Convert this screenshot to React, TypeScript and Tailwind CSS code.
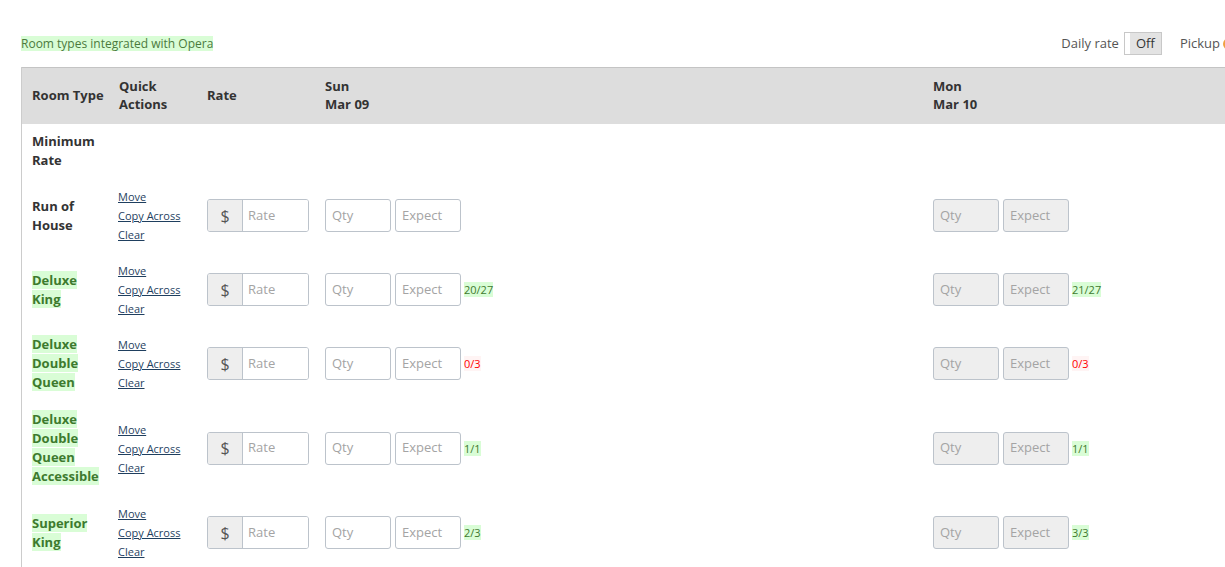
import React from "react";

const font = { fontFamily: '"Open Sans", "Noto Sans", sans-serif' };

type Badge = { text: string; kind: "ok" | "bad" };

type Row = {
  name: string[];
  opera: boolean;
  tall?: boolean;
  sun?: Badge;
  mon?: Badge;
};

const rows: Row[] = [
  { name: ["Run of", "House"], opera: false },
  { name: ["Deluxe", "King"], opera: true, sun: { text: "20/27", kind: "ok" }, mon: { text: "21/27", kind: "ok" } },
  { name: ["Deluxe", "Double", "Queen"], opera: true, sun: { text: "0/3", kind: "bad" }, mon: { text: "0/3", kind: "bad" } },
  {
    name: ["Deluxe", "Double", "Queen", "Accessible"],
    opera: true,
    tall: true,
    sun: { text: "1/1", kind: "ok" },
    mon: { text: "1/1", kind: "ok" },
  },
  { name: ["Superior", "King"], opera: true, sun: { text: "2/3", kind: "ok" }, mon: { text: "3/3", kind: "ok" } },
];

function Count({ b }: { b?: Badge }) {
  if (!b) return null;
  return (
    <span
      className={
        b.kind === "ok"
          ? "ml-[3px] bg-[#d9fdd6] text-[11px] leading-[15px] text-[#3f7a2e]"
          : "ml-[3px] bg-[#fff4f4] text-[11px] leading-[15px] text-[#ff0000]"
      }
    >
      {b.text}
    </span>
  );
}

function Box({ label, disabled }: { label: string; disabled?: boolean }) {
  return (
    <div
      className={
        "flex h-[33px] w-[66px] items-center rounded-[3px] border border-[#bcc3cb] px-[6px] text-[13px] text-[#a4a4a4] " +
        (disabled ? "bg-[#eeeeee]" : "bg-white")
      }
    >
      {label}
    </div>
  );
}

function DayCell({ disabled, badge }: { disabled?: boolean; badge?: Badge }) {
  return (
    <div className="flex items-center">
      <Box label="Qty" disabled={disabled} />
      <div className="ml-[4px]">
        <Box label="Expect" disabled={disabled} />
      </div>
      <Count b={badge} />
    </div>
  );
}

export default function App() {
  return (
    <div className="h-[567px] w-[1225px] overflow-hidden bg-white text-[#333]" style={font}>
      <div className="flex w-[1235px] items-center justify-between pl-[21px] pt-[32px]">
        <span className="bg-[#d9fdd6] text-[12px] leading-[15px] text-[#4b7a3d]">
          Room types integrated with Opera
        </span>
        <div className="flex shrink-0 items-center text-[13px] text-[#555]">
          <span className="mr-[5px]">Daily rate</span>
          <div className="flex h-[23px] w-[38px] border border-[#c8c8c8] bg-[#e3e3e3]">
            <div className="w-[5px] bg-white" />
            <span className="flex flex-1 items-center justify-center text-[13px] text-[#333]">Off</span>
          </div>
          <span className="ml-[18px]">Pickup</span>
          <span className="ml-[3px] inline-block h-[12px] w-[12px] rounded-full border-2 border-[#f0a040]" />
        </div>
      </div>

      <div className="ml-[21px] mt-[12px] border-l border-[#cccccc]">
        <table className="w-[1510px] table-fixed border-collapse">
          <colgroup>
            <col className="w-[87px]" />
            <col className="w-[88px]" />
            <col className="w-[119px]" />
            <col className="w-[608px]" />
            <col className="w-[608px]" />
          </colgroup>
          <thead>
            <tr className="h-[56px] border-t border-[#c4c4c4] bg-[#dddddd] text-left text-[13px] font-bold leading-[18px] text-[#333]">
              <th className="pl-[10px] pb-[1px] align-middle">Room Type</th>
              <th className="pl-[10px] pb-[1px] align-middle">
                Quick
                <br />
                Actions
              </th>
              <th className="pl-[10px] pb-[1px] align-middle">Rate</th>
              <th className="pl-[9px] pb-[1px] align-middle">
                Sun
                <br />
                Mar 09
              </th>
              <th className="pl-[9px] pb-[1px] align-middle">
                Mon
                <br />
                Mar 10
              </th>
            </tr>
          </thead>
          <tbody>
            <tr>
              <td className="pt-[8px] pb-[9px] pl-[10px] align-middle text-[13px] font-bold leading-[19px]">
                Minimum
                <br />
                Rate
              </td>
              <td />
              <td />
              <td />
              <td />
            </tr>
            {rows.map((r) => (
              <tr key={r.name.join(" ")} className={r.tall ? "h-[95px]" : "h-[74px]"}>
                <td className="py-[8px] pl-[10px] align-middle text-[13px] font-bold leading-[19px]">
                  {r.name.map((w) => (
                    <div key={w}>
                      <span className={r.opera ? "bg-[#d9fdd6] text-[#3d7a2e]" : "text-[#333]"}>{w}</span>
                    </div>
                  ))}
                </td>
                <td className="py-[8px] pl-[9px] align-middle text-[11px] leading-[19px] text-[#1f3f5f]">
                  <div className="underline">Move</div>
                  <div className="underline">Copy Across</div>
                  <div className="underline">Clear</div>
                </td>
                <td className="pl-[10px] align-middle">
                  <div className="flex h-[33px] w-[102px] overflow-hidden rounded-[3px] border border-[#bcc3cb] text-[13px]">
                    <div className="flex w-[35px] items-center justify-center border-r border-[#bcc3cb] bg-[#eeeeee] text-[16px] text-[#555]">
                      $
                    </div>
                    <div className="flex flex-1 items-center bg-white px-[5px] text-[#a4a4a4]">Rate</div>
                  </div>
                </td>
                <td className="pl-[9px] align-middle">
                  <DayCell badge={r.sun} />
                </td>
                <td className="pl-[9px] align-middle">
                  <DayCell disabled badge={r.mon} />
                </td>
              </tr>
            ))}
          </tbody>
        </table>
      </div>
    </div>
  );
}
